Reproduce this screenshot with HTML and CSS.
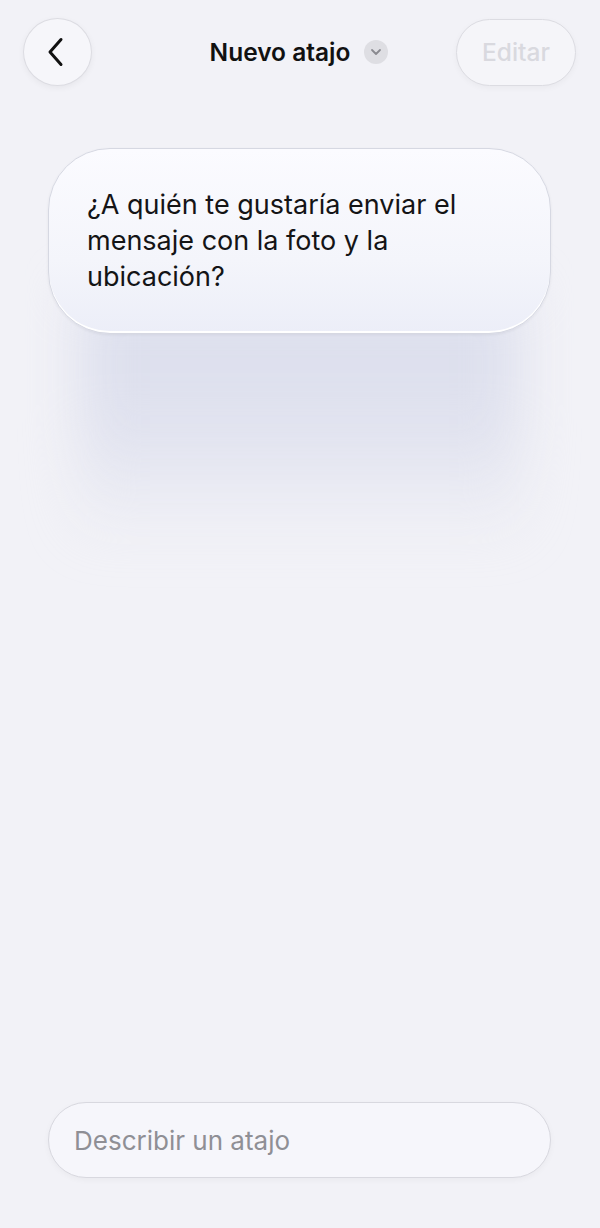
FILE: index.html
```html
<!DOCTYPE html>
<html lang="es">
<head>
  <meta charset="UTF-8" />
  <title>Nuevo atajo</title>
  <link rel="stylesheet" href="styles.css">
</head>
<body>
  <div class="pantalla">
    <header class="cabecera">
      <button class="btn-volver" aria-label="Volver">
        <svg width="24" height="32" viewBox="0 0 24 32">
          <path d="M17 3.5 L6 16 L17 28.5" fill="none" stroke="#111" stroke-width="3" stroke-linecap="round" stroke-linejoin="round"/>
        </svg>
      </button>

      <div class="titulo">
        <span>Nuevo atajo</span>
        <span class="chevron">
          <svg width="12" height="8" viewBox="0 0 12 8">
            <path d="M2 2 L6 6 L10 2" fill="none" stroke="#8a8a90" stroke-width="1.8" stroke-linecap="round" stroke-linejoin="round"/>
          </svg>
        </span>
      </div>

      <button class="btn-editar">Editar</button>
    </header>

    <main class="contenido">
      <div class="burbuja">
        <p>¿A quién te gustaría enviar el mensaje con la foto y la ubicación?</p>
      </div>
    </main>

    <footer class="pie">
      <div class="entrada">Describir un atajo</div>
    </footer>
  </div>
</body>
</html>
```

FILE: styles.css
```css
body {
  margin: 0;
  background-color: #f2f2f7;
  font-family: Inter, "Noto Sans", Arial, sans-serif;
  color: #111;
}

.pantalla {
  height: 1228px;
  display: flex;
  flex-direction: column;
}

.cabecera {
  display: flex;
  align-items: center;
  justify-content: space-between;
  padding: 18px 24px 0 23px;
}

.btn-volver {
  width: 69px;
  height: 68px;
  border-radius: 50%;
  border: 1px solid #dcdce2;
  background-color: #f6f6fa;
  box-shadow: 0 2px 6px rgba(0, 0, 0, 0.05);
  display: flex;
  align-items: center;
  justify-content: center;
  padding: 0 3px 0 0;
  cursor: pointer;
}

.titulo {
  display: flex;
  align-items: center;
  gap: 14px;
  font-size: 24.5px;
  font-weight: 600;
  margin-left: 50px;
}

.chevron {
  width: 24px;
  height: 24px;
  border-radius: 50%;
  background-color: #dedee3;
  display: flex;
  align-items: center;
  justify-content: center;
}

.btn-editar {
  width: 120px;
  height: 67px;
  border-radius: 34px;
  border: 1px solid #dcdce2;
  background-color: #f5f5f9;
  box-shadow: 0 2px 6px rgba(0, 0, 0, 0.04);
  color: #d9d9df;
  font-family: Inter, "Noto Sans", Arial, sans-serif;
  font-size: 24.5px;
  font-weight: 500;
  cursor: pointer;
}

.contenido {
  flex: 1;
  padding: 62px 49px 0 48px;
}

.burbuja {
  position: relative;
  border-radius: 62px;
  background: linear-gradient(180deg, #fbfbff 0%, #f4f5fb 60%, #eceef8 100%);
  border: 1px solid #d6d8e2;
  box-shadow: inset 0 -2px 0 #ffffff, 0 1px 3px rgba(0, 0, 0, 0.06);
  padding: 38px 60px 38px 38px;
}

.burbuja::after {
  content: "";
  position: absolute;
  left: 30px;
  right: 30px;
  top: calc(100% - 40px);
  height: 250px;
  background: linear-gradient(180deg, #dcdfed 0%, #dfe1ee 50%, rgba(238, 239, 246, 0) 100%);
  filter: blur(26px);
  z-index: -1;
}

.burbuja p {
  margin: 0;
  font-size: 27px;
  line-height: 36px;
  color: #141416;
}

.pie {
  padding: 0 49px 50px 48px;
}

.entrada {
  height: 74px;
  border-radius: 38px;
  border: 1px solid #d8d8df;
  background-color: #f6f6fb;
  box-shadow: 0 2px 6px rgba(0, 0, 0, 0.04);
  display: flex;
  align-items: center;
  padding-left: 25px;
  font-size: 26px;
  color: #8f8f95;
}
```
